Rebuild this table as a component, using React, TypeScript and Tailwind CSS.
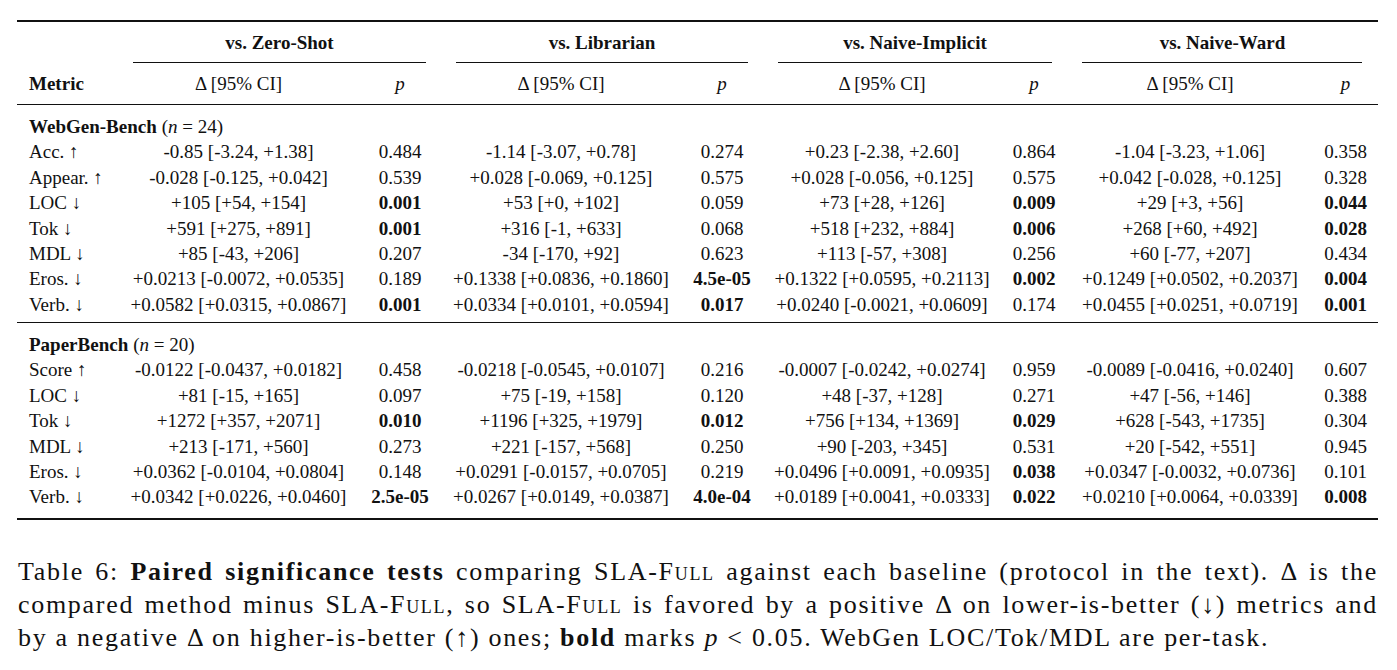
const cols = "grid grid-cols-[101px_241px_82px_240px_82px_238px_66px_246px_65px]";

type Cell = [string, string, boolean?];
type Row = { metric: string; cells: Cell[] };

const webgen: Row[] = [
  { metric: "Acc. ↑", cells: [["-0.85 [-3.24, +1.38]", "0.484"], ["-1.14 [-3.07, +0.78]", "0.274"], ["+0.23 [-2.38, +2.60]", "0.864"], ["-1.04 [-3.23, +1.06]", "0.358"]] },
  { metric: "Appear. ↑", cells: [["-0.028 [-0.125, +0.042]", "0.539"], ["+0.028 [-0.069, +0.125]", "0.575"], ["+0.028 [-0.056, +0.125]", "0.575"], ["+0.042 [-0.028, +0.125]", "0.328"]] },
  { metric: "LOC ↓", cells: [["+105 [+54, +154]", "0.001", true], ["+53 [+0, +102]", "0.059"], ["+73 [+28, +126]", "0.009", true], ["+29 [+3, +56]", "0.044", true]] },
  { metric: "Tok ↓", cells: [["+591 [+275, +891]", "0.001", true], ["+316 [-1, +633]", "0.068"], ["+518 [+232, +884]", "0.006", true], ["+268 [+60, +492]", "0.028", true]] },
  { metric: "MDL ↓", cells: [["+85 [-43, +206]", "0.207"], ["-34 [-170, +92]", "0.623"], ["+113 [-57, +308]", "0.256"], ["+60 [-77, +207]", "0.434"]] },
  { metric: "Eros. ↓", cells: [["+0.0213 [-0.0072, +0.0535]", "0.189"], ["+0.1338 [+0.0836, +0.1860]", "4.5e-05", true], ["+0.1322 [+0.0595, +0.2113]", "0.002", true], ["+0.1249 [+0.0502, +0.2037]", "0.004", true]] },
  { metric: "Verb. ↓", cells: [["+0.0582 [+0.0315, +0.0867]", "0.001", true], ["+0.0334 [+0.0101, +0.0594]", "0.017", true], ["+0.0240 [-0.0021, +0.0609]", "0.174"], ["+0.0455 [+0.0251, +0.0719]", "0.001", true]] },
];

const paper: Row[] = [
  { metric: "Score ↑", cells: [["-0.0122 [-0.0437, +0.0182]", "0.458"], ["-0.0218 [-0.0545, +0.0107]", "0.216"], ["-0.0007 [-0.0242, +0.0274]", "0.959"], ["-0.0089 [-0.0416, +0.0240]", "0.607"]] },
  { metric: "LOC ↓", cells: [["+81 [-15, +165]", "0.097"], ["+75 [-19, +158]", "0.120"], ["+48 [-37, +128]", "0.271"], ["+47 [-56, +146]", "0.388"]] },
  { metric: "Tok ↓", cells: [["+1272 [+357, +2071]", "0.010", true], ["+1196 [+325, +1979]", "0.012", true], ["+756 [+134, +1369]", "0.029", true], ["+628 [-543, +1735]", "0.304"]] },
  { metric: "MDL ↓", cells: [["+213 [-171, +560]", "0.273"], ["+221 [-157, +568]", "0.250"], ["+90 [-203, +345]", "0.531"], ["+20 [-542, +551]", "0.945"]] },
  { metric: "Eros. ↓", cells: [["+0.0362 [-0.0104, +0.0804]", "0.148"], ["+0.0291 [-0.0157, +0.0705]", "0.219"], ["+0.0496 [+0.0091, +0.0935]", "0.038", true], ["+0.0347 [-0.0032, +0.0736]", "0.101"]] },
  { metric: "Verb. ↓", cells: [["+0.0342 [+0.0226, +0.0460]", "2.5e-05", true], ["+0.0267 [+0.0149, +0.0387]", "4.0e-04", true], ["+0.0189 [+0.0041, +0.0333]", "0.022", true], ["+0.0210 [+0.0064, +0.0339]", "0.008", true]] },
];

const groups = ["vs. Zero-Shot", "vs. Librarian", "vs. Naive-Implicit", "vs. Naive-Ward"];

function DataRow({ row }: { row: Row }) {
  return (
    <div className={`${cols} h-[25.4px] items-center`}>
      <div className="pl-[12px] whitespace-nowrap">{row.metric}</div>
      {row.cells.map(([d, p, b], i) => (
        <div key={i} className="contents">
          <div className="text-center whitespace-nowrap">{d}</div>
          <div className={`text-center whitespace-nowrap ${b ? "font-bold" : ""}`}>{p}</div>
        </div>
      ))}
    </div>
  );
}

function Section({ title, n, rows }: { title: string; n: number; rows: Row[] }) {
  return (
    <div>
      <div className="h-[9px]" />
      <div className="h-[25px] flex items-center pl-[12px] whitespace-nowrap">
        <span className="font-bold">{title}</span>
        <span className="ml-[5px]">
          (<i>n</i>&nbsp;=&nbsp;{n})
        </span>
      </div>
      {rows.map((r) => (
        <DataRow key={r.metric} row={r} />
      ))}
    </div>
  );
}

function SlaFull() {
  return <span className="[font-variant:small-caps]">SLA-Full</span>;
}

export default function App() {
  return (
    <div className="w-[1397px] h-[670px] bg-white text-[#111] font-['Liberation_Serif'] overflow-hidden">
      <div className="ml-[17px] w-[1361px] pt-[20px] text-[19px] leading-none">
        <div className="h-[2px] bg-[#111]" />

        <div className={`${cols} h-[40px] items-center`}>
          <div />
          {groups.map((g) => (
            <div key={g} className="col-span-2 text-center font-bold whitespace-nowrap">
              {g}
            </div>
          ))}
        </div>
        <div className={`${cols} h-[1px]`}>
          <div />
          {groups.map((g, i) => (
            <div key={g} className={`col-span-2 bg-[#111] ml-[15px] ${i === 3 ? "mr-[16px]" : "mr-[15px]"}`} />
          ))}
        </div>
        <div className={`${cols} h-[41px] items-center`}>
          <div className="pl-[12px] font-bold">Metric</div>
          {groups.map((g) => (
            <div key={g} className="contents">
              <div className="text-center whitespace-nowrap">Δ [95% CI]</div>
              <div className="text-center italic">p</div>
            </div>
          ))}
        </div>
        <div className="h-[1.2px] bg-[#111]" />

        <Section title="WebGen-Bench" n={24} rows={webgen} />
        <div className="h-[5px]" />
        <div className="h-[1.3px] bg-[#111]" />

        <Section title="PaperBench" n={20} rows={paper} />
        <div className="h-[8px]" />
        <div className="h-[2px] bg-[#111]" />
      </div>

      <div className="ml-[18px] w-[1360px] mt-[35px] text-[26px] leading-[33px] tracking-[1.7px]">
        <div className="text-justify [text-align-last:justify] whitespace-nowrap">
          Table 6: <b>Paired significance tests</b> comparing <SlaFull /> against each baseline (protocol in the text). Δ is the
        </div>
        <div className="text-justify [text-align-last:justify] whitespace-nowrap">
          compared method minus <SlaFull />, so <SlaFull /> is favored by a positive Δ on lower-is-better (↓) metrics and
        </div>
        <div className="whitespace-nowrap">
          by a negative Δ on higher-is-better (↑) ones; <b>bold</b> marks <i>p</i> &lt; 0.05. WebGen LOC/Tok/MDL are per-task.
        </div>
      </div>
    </div>
  );
}
